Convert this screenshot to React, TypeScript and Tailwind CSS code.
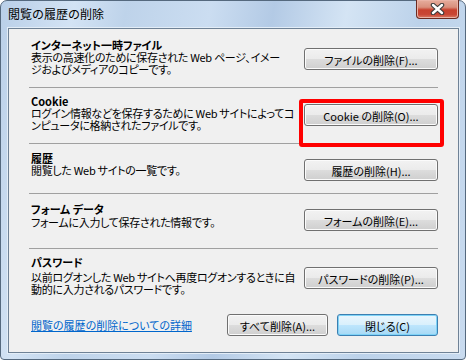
/**
 * IE7 "閲覧の履歴の削除" dialog (Windows Vista look)
 */
type Section = {
    title: string;
    lines: string[];
    button: string;
    box: string;
    text: string;
    gap: string;
    btn: string;
    highlight?: boolean;
};

const sections: Section[] = [
    {
        title: "インターネット一時ファイル",
        lines: ["表示の高速化のために保存された Web ページ、イメー", "ジおよびメディアのコピーです。"],
        button: "ファイルの削除(F)...",
        box: "h-[58px]",
        text: "pt-[10px]",
        gap: "mb-0",
        btn: "mt-[19px]",
    },
    {
        title: "Cookie",
        lines: ["ログイン情報などを保存するために Web サイトによってコ", "ンピュータに格納されたファイルです。"],
        button: "Cookie の削除(O)...",
        box: "h-[55px]",
        text: "pt-[7px]",
        gap: "mb-0",
        btn: "mt-[16px]",
        highlight: true,
    },
    {
        title: "履歴",
        lines: ["閲覧した Web サイトの一覧です。"],
        button: "履歴の削除(H)...",
        box: "h-[49px]",
        text: "pt-[8px]",
        gap: "mb-0",
        btn: "mt-[15px]",
    },
    {
        title: "フォーム データ",
        lines: ["フォームに入力して保存された情報です。"],
        button: "フォームの削除(E)...",
        box: "h-[54px]",
        text: "pt-[9px]",
        gap: "mb-px",
        btn: "mt-[15px]",
    },
    {
        title: "パスワード",
        lines: ["以前ログオンした Web サイトへ再度ログオンするときに自", "動的に入力されるパスワードです。"],
        button: "パスワードの削除(P)...",
        box: "h-[51px]",
        text: "pt-[7px]",
        gap: "mb-[3px]",
        btn: "mt-[18px]",
    },
];

function VistaButton({ label, className = "", primary = false }: { label: string; className?: string; primary?: boolean }) {
    return (
        <div
            className={`flex h-[22px] items-center justify-center rounded-[3px] border text-[11px] leading-[12px] text-black ${
                primary
                    ? "border-[#3c7fb1] bg-[linear-gradient(to_bottom,#eaf6fd_0%,#d9f0fc_49%,#bee6fd_50%,#a7d9f5_100%)] shadow-[inset_0_0_0_1px_#7fd3f7]"
                    : "border-[#707070] bg-[linear-gradient(to_bottom,#f2f2f2_0%,#ebebeb_49%,#dddddd_50%,#cfcfcf_100%)] shadow-[inset_0_0_0_1px_#fbfbfb]"
            } ${className}`}
        >
            <span className="pt-px">{label}</span>
        </div>
    );
}

function CloseButton() {
    return (
        <div className="-mt-px mr-[6px] flex h-[19px] w-[43px] items-center justify-center rounded-b-[4px] border border-t-0 border-[#6b2a20] bg-[linear-gradient(to_bottom,#e6ad9d_0%,#d98f7c_40%,#c8412e_55%,#c94634_80%,#d97a64_100%)] shadow-[inset_0_0_0_1px_#eab3a6]">
            <svg width="15" height="12" viewBox="0 0 15 12">
                <path d="M3 2 L12 10 M12 2 L3 10" stroke="#3a3a3a" strokeWidth="4.5" strokeLinecap="round" />
                <path d="M3 2 L12 10 M12 2 L3 10" stroke="#ffffff" strokeWidth="2.4" strokeLinecap="round" />
            </svg>
        </div>
    );
}

export default function App() {
    return (
        <div className="h-[360px] w-[466px] bg-white font-['Noto_Sans_CJK_JP',sans-serif]">
            <div className="flex h-full w-full flex-col rounded-t-[7px] rounded-b-[4px] border border-[#55697e] bg-[linear-gradient(100deg,#b9cfe8_0%,#d3e3f4_14%,#bed3ea_24%,#cbddf1_40%,#b3cae5_52%,#d4e4f4_66%,#bcd2ea_80%,#c9dbef_100%)]">
                {/* title bar */}
                <div className="flex h-[27px] shrink-0 items-start justify-between">
                    <div className="pl-[7px] pt-[7px] text-[12px] leading-[12px] text-black">閲覧の履歴の削除</div>
                    <CloseButton />
                </div>

                {/* client area */}
                <div className="ml-[7px] mr-[6px] flex flex-1 flex-col border border-[#6f8296] bg-[#f0f0f0] px-[20px] text-[11px] text-black shadow-[0_0_0_1px_#e3edf7] [font-feature-settings:'palt']">
                    {sections.map((s, i) => (
                        <div key={s.title}>
                            {i > 0 && <div className="h-px bg-[#a0a0a0]" />}
                            <div className={`flex ${s.box}`}>
                                <div className={`min-w-0 flex-1 pl-[2px] ${s.text}`}>
                                    <div className={`whitespace-nowrap font-bold leading-[12px] ${s.gap}`}>{s.title}</div>
                                    {s.lines.map((l) => (
                                        <div key={l} className="whitespace-nowrap leading-[12px] tracking-[-0.3px]">
                                            {l}
                                        </div>
                                    ))}
                                </div>
                                <div className={`relative shrink-0 ${s.btn}`}>
                                    <VistaButton label={s.button} className="w-[134px]" />
                                    {s.highlight && (
                                        <div className="absolute -bottom-[4px] -left-[5px] -right-[6px] -top-[5px] rounded-[3px] border-4 border-[#ff0000]" />
                                    )}
                                </div>
                            </div>
                        </div>
                    ))}

                    {/* bottom row */}
                    <div className="mt-[14px] flex items-center justify-between">
                        <a href="#" className="pl-[2px] leading-[12px] text-[#0066cc] underline">
                            閲覧の履歴の削除についての詳細
                        </a>
                        <div className="flex gap-[9px]">
                            <VistaButton label="すべて削除(A)..." className="w-[101px]" />
                            <VistaButton label="閉じる(C)" className="w-[101px]" primary />
                        </div>
                    </div>
                </div>
                <div className="h-[6px] shrink-0" />
            </div>
        </div>
    );
}
